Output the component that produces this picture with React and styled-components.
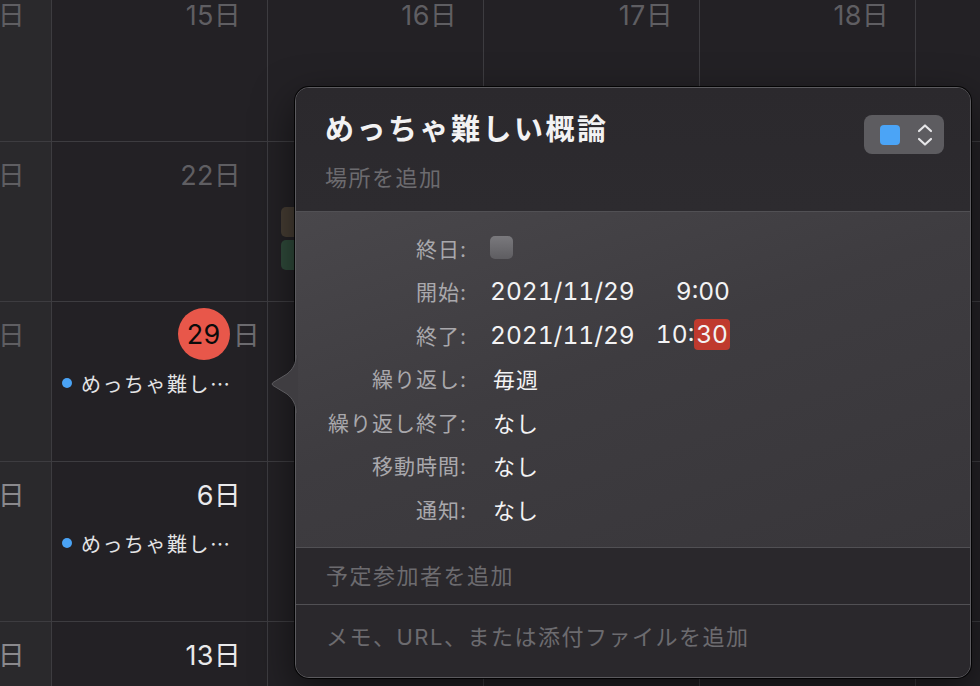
import React from "react";
import styled, { createGlobalStyle } from "styled-components";

const Global = createGlobalStyle`
  html, body { margin: 0; padding: 0; background: #232125; }
  body { font-family: "Inter", "Noto Sans CJK JP", sans-serif; -webkit-font-smoothing: antialiased; }
`;

const FONT = `"Inter", "Noto Sans CJK JP", sans-serif`;
const JP = `"Noto Sans CJK JP", sans-serif`;

const Stage = styled.div`
  position: relative;
  width: 980px;
  height: 686px;
  overflow: hidden;
  background: #232125;
`;

const Grid = styled.div`
  display: grid;
  grid-template-columns: 51px repeat(5, 215px);
  grid-auto-rows: 159px;
  gap: 1px;
  margin-top: -18px;
  width: max-content;
  background: #3d3c40;
`;

const Cell = styled.div`
  display: flex;
  flex-direction: column;
  overflow: hidden;
  background: ${(p) => (p.$weekend ? "#2a292c" : "#232125")};
`;

const DayLabel = styled.div`
  height: 62px;
  margin-bottom: 2px;
  display: flex;
  align-items: center;
  justify-content: flex-end;
  padding-right: ${(p) => (p.$today ? "7px" : "26px")};
  font-family: ${FONT};
  font-size: 27px;
  letter-spacing: 0.3px;
  white-space: nowrap;
  color: ${(p) => p.$color};
`;

const TodayCircle = styled.span`
  width: 52px;
  height: 52px;
  border-radius: 50%;
  background: #e8574a;
  color: #0b0b0b;
  display: flex;
  align-items: center;
  justify-content: center;
  margin-right: 3px;
  margin-top: 2px;
`;

const TodaySuffix = styled.span`
  color: #6c6b6f;
`;

const EventRow = styled.div`
  height: 34px;
  display: flex;
  align-items: center;
  padding-left: 10px;
  gap: 9px;
  font-family: ${JP};
  font-size: 20px;
  letter-spacing: 1.5px;
  color: #e4e4e6;
  white-space: nowrap;
`;

const Dot = styled.span`
  width: 10px;
  height: 10px;
  border-radius: 50%;
  background: #4aa3f5;
  flex: none;
`;

const BarList = styled.div`
  display: flex;
  flex-direction: column;
  gap: 3px;
  padding-left: 13px;
  margin-top: 1px;
`;

const Bar = styled.div`
  height: 30px;
  border-radius: 5px;
  background: ${(p) => p.$color};
`;

/* ---------- Popover ---------- */

const Popover = styled.div`
  position: absolute;
  left: 295px;
  top: 87px;
  width: 676px;
  height: 591px;
  box-sizing: border-box;
  border: 1px solid #5b5a5e;
  border-radius: 14px;
  box-shadow: 0 0 0 1px rgba(0, 0, 0, 0.85), 0 14px 40px rgba(0, 0, 0, 0.55);
`;

const Inner = styled.div`
  height: 100%;
  border-radius: 13px;
  overflow: hidden;
  display: flex;
  flex-direction: column;
  background: #2a282c;
`;

const Arrow = styled.svg`
  position: absolute;
  left: -27px;
  top: 267px;
  overflow: visible;
`;

const Header = styled.div`
  height: 124px;
  flex: none;
  display: flex;
  justify-content: space-between;
  align-items: flex-start;
  padding: 24px 26px 0 29px;
  box-sizing: border-box;
  border-bottom: 1px solid #515054;
  background: linear-gradient(180deg, #2b292d 0%, #2d2b2f 100%);
`;

const TitleBlock = styled.div`
  display: flex;
  flex-direction: column;
  gap: 15px;
`;

const Title = styled.div`
  font-family: ${FONT};
  font-size: 29px;
  line-height: 36px;
  font-weight: 700;
  letter-spacing: 2.5px;
  color: #f2f2f3;
`;

const Placeholder = styled.div`
  font-family: ${FONT};
  font-size: 22px;
  line-height: 30px;
  letter-spacing: 1.5px;
  color: #6c6b6f;
`;

const ColorButton = styled.div`
  margin-top: 3px;
  width: 80px;
  height: 39px;
  border-radius: 8px;
  background: #5d5c60;
  display: flex;
  align-items: center;
  padding-left: 16px;
  gap: 17px;
  box-sizing: border-box;
`;

const Swatch = styled.span`
  width: 20px;
  height: 20px;
  border-radius: 4px;
  background: #4ba4f6;
`;

const Details = styled.div`
  flex: none;
  height: 336px;
  box-sizing: border-box;
  padding-top: 14px;
  border-bottom: 1px solid #515054;
  background: linear-gradient(160deg, #49474b 0%, #3e3c40 45%, #38363a 100%);
  display: grid;
  grid-template-columns: 171px 1fr;
  grid-auto-rows: 43.5px;
  column-gap: 23px;
  align-items: center;
`;

const Label = styled.div`
  text-align: right;
  font-family: ${FONT};
  font-size: 21px;
  letter-spacing: 1px;
  color: #a9a8ac;
  white-space: nowrap;
`;

const Value = styled.div`
  font-family: ${FONT};
  font-size: 22px;
  letter-spacing: 1px;
  padding-left: 3px;
  color: #f3f3f4;
  white-space: nowrap;
`;

const DateTime = styled.div`
  width: 240px;
  display: flex;
  justify-content: space-between;
  align-items: center;
  font-family: ${FONT};
  font-size: 24.5px;
  font-feature-settings: "tnum";
  color: #f3f3f4;
  white-space: nowrap;
`;

const Highlight = styled.span`
  display: inline-block;
  background: #bf3a2e;
  border-radius: 4px;
  padding: 0 2px;
  line-height: 31px;
`;

const Checkbox = styled.span`
  display: block;
  width: 23px;
  height: 23px;
  border-radius: 5px;
  background: linear-gradient(180deg, #7a797d 0%, #5e5d61 100%);
`;

const Section = styled.div`
  flex: none;
  height: ${(p) => p.$h}px;
  box-sizing: border-box;
  padding: ${(p) => p.$pt}px 0 0 30px;
  border-bottom: ${(p) => (p.$last ? "none" : "1px solid #515054")};
`;

const weeks = [
  ["14日", "15日", "16日", "17日", "18日", "19日"],
  ["21日", "22日", "23日", "24日", "25日", "26日"],
  ["28日", "29", "30日", "1日", "2日", "3日"],
  ["5日", "6日", "7日", "8日", "9日", "10日"],
  ["12日", "13日", "14日", "15日", "16日", "17日"],
];

const GRAY = "#5f5e62";
const WHITE = "#e9e9eb";
const WKND_DEC = "#8a898d";

function dayColor(r, c) {
  if (r <= 2) return GRAY;
  if (c === 0) return WKND_DEC;
  return WHITE;
}

function Chevrons() {
  return (
    <svg width="16" height="24" viewBox="0 0 16 24" fill="none" stroke="#e6e6e8" strokeWidth="2.2" strokeLinecap="round" strokeLinejoin="round">
      <polyline points="2,8 8,2.5 14,8" />
      <polyline points="2,16 8,21.5 14,16" />
    </svg>
  );
}

export default function App() {
  return (
    <Stage>
      <Global />
      <Grid>
        {weeks.map((week, r) =>
          week.map((d, c) => {
            const today = r === 2 && c === 1;
            return (
              <Cell key={`${r}-${c}`} $weekend={c === 0}>
                <DayLabel $color={dayColor(r, c)} $today={today}>
                  {today ? (
                    <>
                      <TodayCircle>29</TodayCircle>
                      <TodaySuffix>日</TodaySuffix>
                    </>
                  ) : (
                    d
                  )}
                </DayLabel>
                {r === 1 && c === 2 && (
                  <BarList>
                    <Bar $color="#463d33" />
                    <Bar $color="#2f4a3a" />
                  </BarList>
                )}
                {((r === 2 && c === 1) || (r === 3 && c === 1)) && (
                  <EventRow>
                    <Dot />
                    <span>めっちゃ難し…</span>
                  </EventRow>
                )}
              </Cell>
            );
          })
        )}
      </Grid>

      <Popover>
        <Inner>
          <Header>
            <TitleBlock>
              <Title>めっちゃ難しい概論</Title>
              <Placeholder>場所を追加</Placeholder>
            </TitleBlock>
            <ColorButton>
              <Swatch />
              <Chevrons />
            </ColorButton>
          </Header>
          <Details>
            <Label>終日:</Label>
            <div>
              <Checkbox />
            </div>
            <Label>開始:</Label>
            <DateTime>
              <span>2021/11/29</span>
              <span>9:00</span>
            </DateTime>
            <Label>終了:</Label>
            <DateTime>
              <span>2021/11/29</span>
              <span>
                10:<Highlight>30</Highlight>
              </span>
            </DateTime>
            <Label>繰り返し:</Label>
            <Value>毎週</Value>
            <Label>繰り返し終了:</Label>
            <Value>なし</Value>
            <Label>移動時間:</Label>
            <Value>なし</Value>
            <Label>通知:</Label>
            <Value>なし</Value>
          </Details>
          <Section $h={57} $pt={13}>
            <Placeholder>予定参加者を追加</Placeholder>
          </Section>
          <Section $h={72} $pt={17} $last>
            <Placeholder>メモ、URL、または添付ファイルを追加</Placeholder>
          </Section>
        </Inner>
        <Arrow width="30" height="58" viewBox="0 0 30 58">
          <path d="M29 0 L27 0 C27 9 24 14 18 19 L4 27.5 Q2 29 4 30.5 L18 39 C24 44 27 49 27 58 L29 58 Z" fill="#3f3d41" />
          <path d="M27 0 C27 9 24 14 18 19 L4 27.5 Q2 29 4 30.5 L18 39 C24 44 27 49 27 58" fill="none" stroke="#5b5a5e" strokeWidth="1" />
        </Arrow>
      </Popover>
    </Stage>
  );
}
